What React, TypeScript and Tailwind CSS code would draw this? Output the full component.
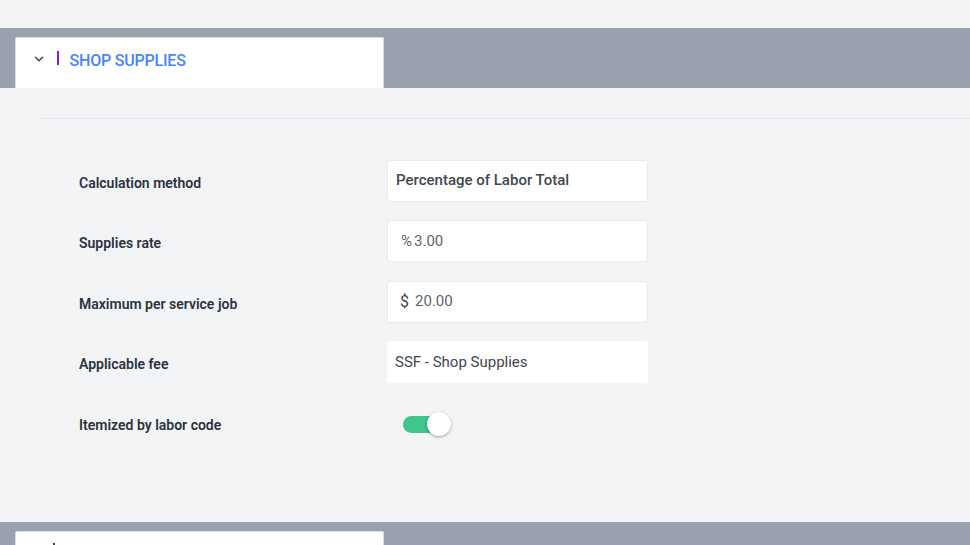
import { ChevronDown } from 'lucide-react';

function Row({ label, children }: { label: string; children: React.ReactNode }) {
  return (
    <div className="flex h-[41px] items-center">
      <div className="w-[308px] pt-[5px] text-[14px] font-semibold text-[#2b3340]">{label}</div>
      {children}
    </div>
  );
}

function Field({ children, plain }: { children: React.ReactNode; plain?: boolean }) {
  return (
    <div
      className={
        'flex h-[42px] w-[261px] items-center rounded-[3px] bg-white px-[8px] text-[15px] ' +
        (plain ? '' : 'border border-[#e8eaed]')
      }
    >
      {children}
    </div>
  );
}

export default function App() {
  return (
    <div className="h-[545px] w-[970px] overflow-hidden bg-[#f3f4f6] font-['Roboto',sans-serif]">
      <div className="h-[28px]" />
      <div className="flex h-[60px] items-end bg-[#99a1ae] pl-[15px]">
        <div className="flex h-[51px] w-[369px] items-start rounded-t-[2px] border border-b-0 border-[#d9dde3] bg-white pl-[16px] pt-[11px]">
          <ChevronDown className="mt-[3px] h-[14px] w-[14px] text-[#374151]" strokeWidth={2.5} />
          <span className="ml-[11px] mt-[2px] h-[14px] w-[1.5px] bg-[#7e22ce]" />
          <span className="ml-[11px] text-[16px] font-medium tracking-[-0.2px] text-[#4a86f7]">SHOP SUPPLIES</span>
        </div>
      </div>
      <div className="pl-[40px] pt-[30px]">
        <div className="h-px bg-[#e9ebee]" />
      </div>
      <div className="flex h-[403px] flex-col gap-[19.5px] pl-[79px] pt-[41px]">
        <Row label="Calculation method">
          <Field>
            <span className="font-medium text-[#414852]">Percentage of Labor Total</span>
          </Field>
        </Row>
        <Row label="Supplies rate">
          <Field>
            <span className="ml-[5px] text-[#5b6472]">%</span>
            <span className="ml-[2px] text-[#5b6472]">3.00</span>
          </Field>
        </Row>
        <Row label="Maximum per service job">
          <Field>
            <span className="ml-[4px] text-[16px] text-[#3e4656]">$</span>
            <span className="ml-[6px] text-[#5b6472]">20.00</span>
          </Field>
        </Row>
        <Row label="Applicable fee">
          <Field plain>
            <span className="text-[#414852]">SSF - Shop Supplies</span>
          </Field>
        </Row>
        <Row label="Itemized by labor code">
          <div className="relative ml-[16px] mt-[3px] h-[24px] w-[48px]">
            <div className="absolute left-0 top-[4px] h-[17px] w-[38px] rounded-full bg-[#3ec68b]" />
            <div className="absolute right-0 top-0 h-[24px] w-[24px] rounded-full bg-white shadow-[0_1px_3px_rgba(0,0,0,0.35)]" />
          </div>
        </Row>
      </div>
      <div className="flex h-[40px] items-start bg-[#99a1ae] pl-[15px] pt-[9px]">
        <div className="flex h-[40px] w-[369px] rounded-t-[2px] border border-b-0 border-[#d9dde3] bg-white pl-[37px] pt-[11px]">
          <span className="h-[14px] w-[1.5px] bg-[#374151]" />
        </div>
      </div>
    </div>
  );
}
